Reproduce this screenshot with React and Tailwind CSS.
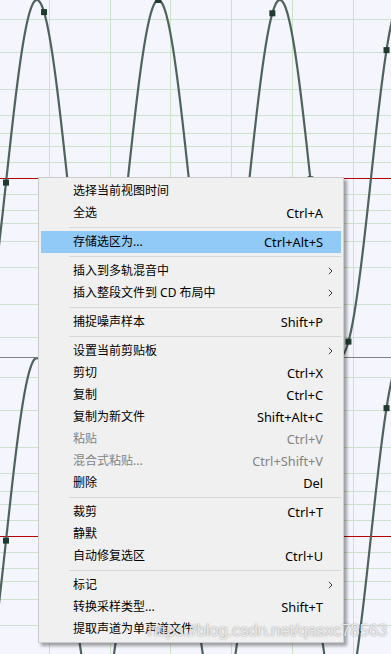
import React from "react";

const W = 391;
const H = 654;
const PERIOD = 121.5;
const X0 = 6.5;
const AMP = 178;
const CENTERS = [178, 536];
const OFFS = [16, 32, 45, 63, 89, 126, 159];
const VX = [49, 110, 170, 231, 292, 353];

function wavePath(c) {
  let d = "";
  for (let x = -4; x <= W + 4; x += 0.5) {
    const y = c - AMP * Math.sin((2 * Math.PI * (x - X0)) / PERIOD);
    d += (d ? " L" : "M") + x.toFixed(2) + " " + y.toFixed(2);
  }
  return d;
}

function samples(c) {
  const pts = [];
  for (let k = 0; k < 11; k++) {
    const x = 6 + 38.05 * k;
    const y = c - AMP * Math.sin((2 * Math.PI * (x - X0)) / PERIOD);
    pts.push([x, y]);
  }
  return pts;
}

function Chart() {
  return (
    <svg className="absolute inset-0" width={W} height={H} viewBox={`0 0 ${W} ${H}`}>
      {VX.map((x) => (
        <line key={"v" + x} x1={x + 0.5} x2={x + 0.5} y1={0} y2={H} stroke="#cde2cc" strokeWidth="1" />
      ))}
      {CENTERS.map((c) =>
        OFFS.flatMap((o) => [c - o, c + o]).map((y) => (
          <line key={"h" + c + "-" + y} x1={0} x2={W} y1={y + 0.5} y2={y + 0.5} stroke="#cde2cc" strokeWidth="1" />
        ))
      )}
      <line x1={0} x2={W} y1={357.5} y2={357.5} stroke="#808080" strokeWidth="1" />
      {CENTERS.map((c) => (
        <line key={"r" + c} x1={0} x2={W} y1={c + 0.5} y2={c + 0.5} stroke="#b40000" strokeWidth="1" />
      ))}
      <clipPath id="ch1">
        <rect x="0" y="0" width={W} height="357" />
      </clipPath>
      <clipPath id="ch2">
        <rect x="0" y="358" width={W} height={H - 358} />
      </clipPath>
      {CENTERS.map((c, i) => (
        <g key={"w" + c} clipPath={`url(#ch${i + 1})`}>
          <path d={wavePath(c)} fill="none" stroke="#4e635c" strokeWidth="2.2" />
          {samples(c).map(([x, y]) => (
            <rect key={x} x={x - 3} y={y - 3} width="6" height="6" fill="#1f3a2e" />
          ))}
        </g>
      ))}
    </svg>
  );
}

const ITEMS = [
  { t: "选择当前视图时间" },
  { t: "全选", k: "Ctrl+A" },
  "sep",
  { t: "存储选区为...", k: "Ctrl+Alt+S", hl: true },
  "sep",
  { t: "插入到多轨混音中", sub: true },
  { t: "插入整段文件到 CD 布局中", sub: true },
  "sep",
  { t: "捕捉噪声样本", k: "Shift+P" },
  "sep",
  { t: "设置当前剪贴板", sub: true },
  { t: "剪切", k: "Ctrl+X" },
  { t: "复制", k: "Ctrl+C" },
  { t: "复制为新文件", k: "Shift+Alt+C" },
  { t: "粘贴", k: "Ctrl+V", dis: true },
  { t: "混合式粘贴...", k: "Ctrl+Shift+V", dis: true },
  { t: "删除", k: "Del" },
  "sep",
  { t: "裁剪", k: "Ctrl+T" },
  { t: "静默" },
  { t: "自动修复选区", k: "Ctrl+U" },
  "sep",
  { t: "标记", sub: true },
  { t: "转换采样类型...", k: "Shift+T" },
  { t: "提取声道为单声道文件" },
];

function Chevron() {
  return (
    <svg width="5" height="8" viewBox="0 0 5 8" className="ml-[5px]">
      <path d="M0.8 0.8 L4 4 L0.8 7.2" fill="none" stroke="#3a3a3a" strokeWidth="1" />
    </svg>
  );
}

function Menu() {
  return (
    <div className="absolute left-[38px] top-[177px] w-[306px] border border-[#cccccc] bg-[#f0f0f0] p-[2px] shadow-[3px_3px_3px_rgba(0,0,0,0.35)] font-['Noto_Sans','Noto_Sans_CJK_SC',sans-serif] text-[12px] leading-none">
      {ITEMS.map((it, i) =>
        it === "sep" ? (
          <div key={i} className="h-[7px] flex flex-col pt-[3px] pl-[28px]">
            <div className="h-px bg-[#d7d7d7]" />
          </div>
        ) : (
          <div
            key={i}
            className={
              "h-[22px] flex items-center pl-[32px] " +
              (it.hl ? "bg-[#91c9f7] " : "") +
              (it.dis ? "text-[#838383]" : "text-black")
            }
          >
            <span className="flex-1 whitespace-pre">{it.t}</span>
            <span className="whitespace-pre text-[12.8px]">{it.k || ""}</span>
            <span className="w-[18px] flex items-center">{it.sub ? <Chevron /> : null}</span>
          </div>
        )
      )}
    </div>
  );
}

export default function App() {
  return (
    <div className="relative w-[391px] h-[654px] overflow-hidden bg-[#f4f5fd]">
      <Chart />
      <Menu />
      <div className="absolute left-[148px] top-[622px] font-['Liberation_Sans',sans-serif] text-[17px] tracking-[-0.3px] leading-none text-white/80 [text-shadow:0_0_1.5px_rgba(0,0,0,0.5)] whitespace-nowrap pointer-events-none">
        https://blog.csdn.net/qasxc78563
      </div>
    </div>
  );
}
